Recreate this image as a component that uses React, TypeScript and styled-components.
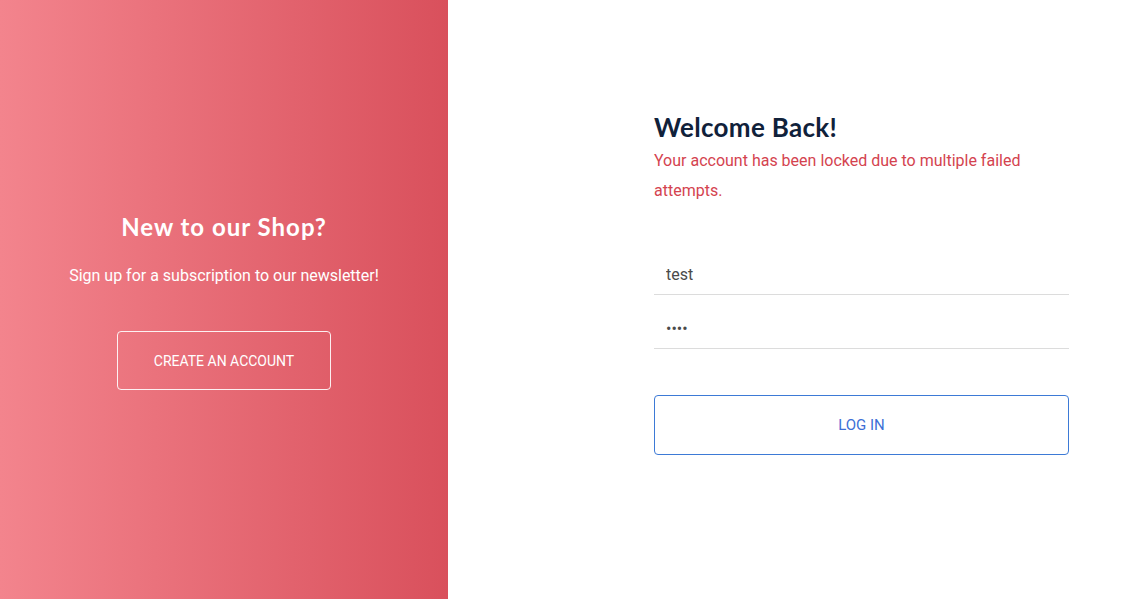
import React from "react";
import styled, { createGlobalStyle } from "styled-components";

const Global = createGlobalStyle`
  html, body { margin: 0; padding: 0; background: #fff; }
  body { font-family: Roboto, "Liberation Sans", sans-serif; }
  * { box-sizing: border-box; }
`;

const Page = styled.div`
  display: flex;
  width: 1125px;
  height: 599px;
`;

const SidePanel = styled.section`
  width: 448px;
  flex: none;
  background: linear-gradient(to right, #f3848d, #d9505c);
  display: flex;
  flex-direction: column;
  align-items: center;
  padding-top: 210px;
  color: #fff;
`;

const SideTitle = styled.h2`
  margin: 0;
  font-family: Lato, "Noto Sans", sans-serif;
  font-weight: 700;
  font-size: 24px;
  letter-spacing: 1px;
  line-height: 34px;
`;

const SideText = styled.p`
  margin: 20px 0 0;
  font-size: 16px;
  line-height: 24px;
`;

const GhostButton = styled.button`
  margin-top: 43px;
  width: 214px;
  height: 59px;
  border: 1px solid rgba(255, 255, 255, 0.9);
  border-radius: 4px;
  background: transparent;
  color: #fff;
  font-family: Roboto, sans-serif;
  font-size: 14px;
  text-transform: uppercase;
`;

const MainPanel = styled.section`
  flex: 1;
  padding: 108px 56px 0 206px;
`;

const Title = styled.h1`
  margin: 0;
  font-family: Lato, "Noto Sans", sans-serif;
  font-weight: 700;
  font-size: 26px;
  letter-spacing: 0.3px;
  line-height: 38px;
  color: #10213a;
`;

const ErrorText = styled.p`
  margin: 0;
  font-size: 16px;
  line-height: 30px;
  color: #d4434f;
`;

const Form = styled.form`
  display: flex;
  flex-direction: column;
  margin-top: 39px;
`;

const Field = styled.input`
  height: 54px;
  border: none;
  border-bottom: 1px solid #dcdcdc;
  padding: 14px 12px 0;
  font-family: Roboto, sans-serif;
  font-size: 16px;
  color: #4a4a4a;
  outline: none;
  background: transparent;
  &:first-child { height: 50px; padding-top: 10px; }
`;

const Primary = styled.button`
  margin-top: 46px;
  height: 60px;
  border: 1px solid #3d7ad6;
  border-radius: 4px;
  background: #fff;
  color: #3d6fd6;
  font-family: Roboto, sans-serif;
  font-size: 15px;
  text-transform: uppercase;
`;

export default function App() {
  return (
    <>
      <Global />
      <Page>
        <SidePanel>
          <SideTitle>New to our Shop?</SideTitle>
          <SideText>Sign up for a subscription to our newsletter!</SideText>
          <GhostButton type="button">Create an account</GhostButton>
        </SidePanel>
        <MainPanel>
          <Title>Welcome Back!</Title>
          <ErrorText>Your account has been locked due to multiple failed attempts.</ErrorText>
          <Form onSubmit={(e) => e.preventDefault()}>
            <Field type="text" defaultValue="test" />
            <Field type="password" defaultValue="test" />
            <Primary type="submit">Log in</Primary>
          </Form>
        </MainPanel>
      </Page>
    </>
  );
}
